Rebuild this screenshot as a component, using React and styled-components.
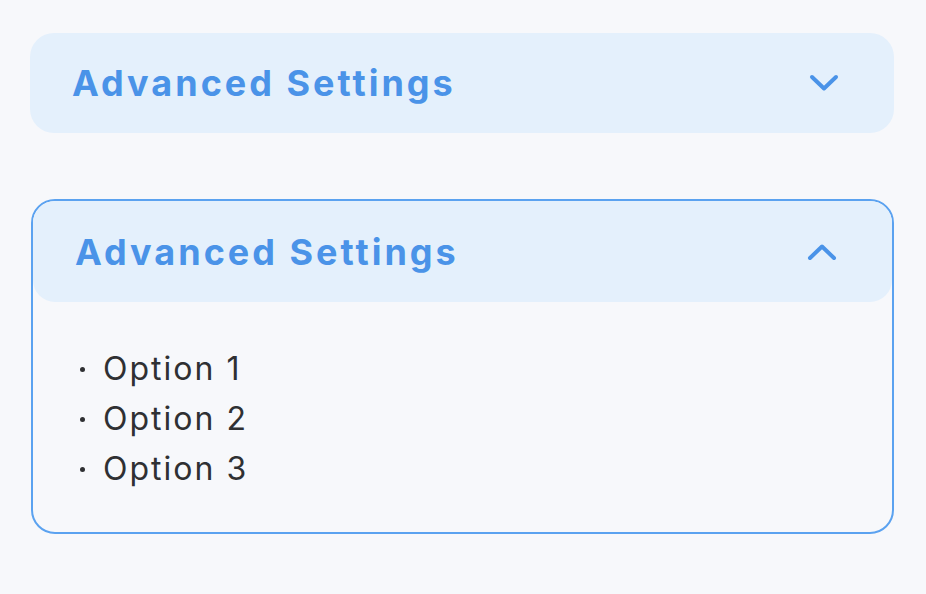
import React from "react";
import styled, { createGlobalStyle } from "styled-components";

const Global = createGlobalStyle`
  html, body { margin: 0; padding: 0; background: #f7f8fb; }
  body { font-family: Inter, "Noto Sans", sans-serif; }
`;

const Page = styled.div`
  width: 926px;
  height: 594px;
  box-sizing: border-box;
  padding: 33px 32px 0 30px;
  display: flex;
  flex-direction: column;
  gap: 66px;
  background: #f7f8fb;
`;

const Panel = styled.div`
  box-sizing: border-box;
  border-radius: 24px;
  border: ${(p) => (p.$open ? "2px solid #5ba2f0" : "none")};
  margin-left: ${(p) => (p.$open ? "1px" : "0")};
`;

const Header = styled.div`
  height: ${(p) => (p.$open ? "101px" : "100px")};
  box-sizing: border-box;
  display: flex;
  align-items: center;
  justify-content: space-between;
  padding: 0 55px 0 42px;
  background: #e4f0fc;
  border-radius: ${(p) => (p.$open ? "22px" : "24px")};
`;

const Title = styled.span`
  font-family: Inter, "Noto Sans", sans-serif;
  font-weight: 700;
  font-size: 36px;
  color: #4a93e8;
  letter-spacing: 3px;
`;

const Chevron = styled.svg`
  width: 30px;
  height: 20px;
  display: block;
`;

const Body = styled.ul`
  list-style: none;
  margin: 0;
  padding: 41px 0 39px 47px;
  display: flex;
  flex-direction: column;
`;

const Item = styled.li`
  display: flex;
  align-items: center;
  height: 50px;
  font-family: Inter, "Noto Sans", sans-serif;
  font-size: 32px;
  letter-spacing: 2px;
  color: #2f3033;
`;

const Dot = styled.span`
  width: 5px;
  height: 5px;
  border-radius: 50%;
  background: #2f3033;
  margin-right: 18px;
  margin-top: 2px;
`;

function Arrow({ up }) {
  return (
    <Chevron viewBox="0 0 30 20">
      <polyline
        points={up ? "3,16 15,4.5 27,16" : "3,4 15,15.5 27,4"}
        fill="none"
        stroke="#4a93e8"
        strokeWidth="4"
        strokeLinecap="round"
        strokeLinejoin="round"
      />
    </Chevron>
  );
}

export default function App() {
  return (
    <>
      <Global />
      <Page>
        <Panel>
          <Header>
            <Title>Advanced Settings</Title>
            <Arrow />
          </Header>
        </Panel>
        <Panel $open>
          <Header $open>
            <Title>Advanced Settings</Title>
            <Arrow up />
          </Header>
          <Body>
            <Item><Dot />Option 1</Item>
            <Item><Dot />Option 2</Item>
            <Item><Dot />Option 3</Item>
          </Body>
        </Panel>
      </Page>
    </>
  );
}
